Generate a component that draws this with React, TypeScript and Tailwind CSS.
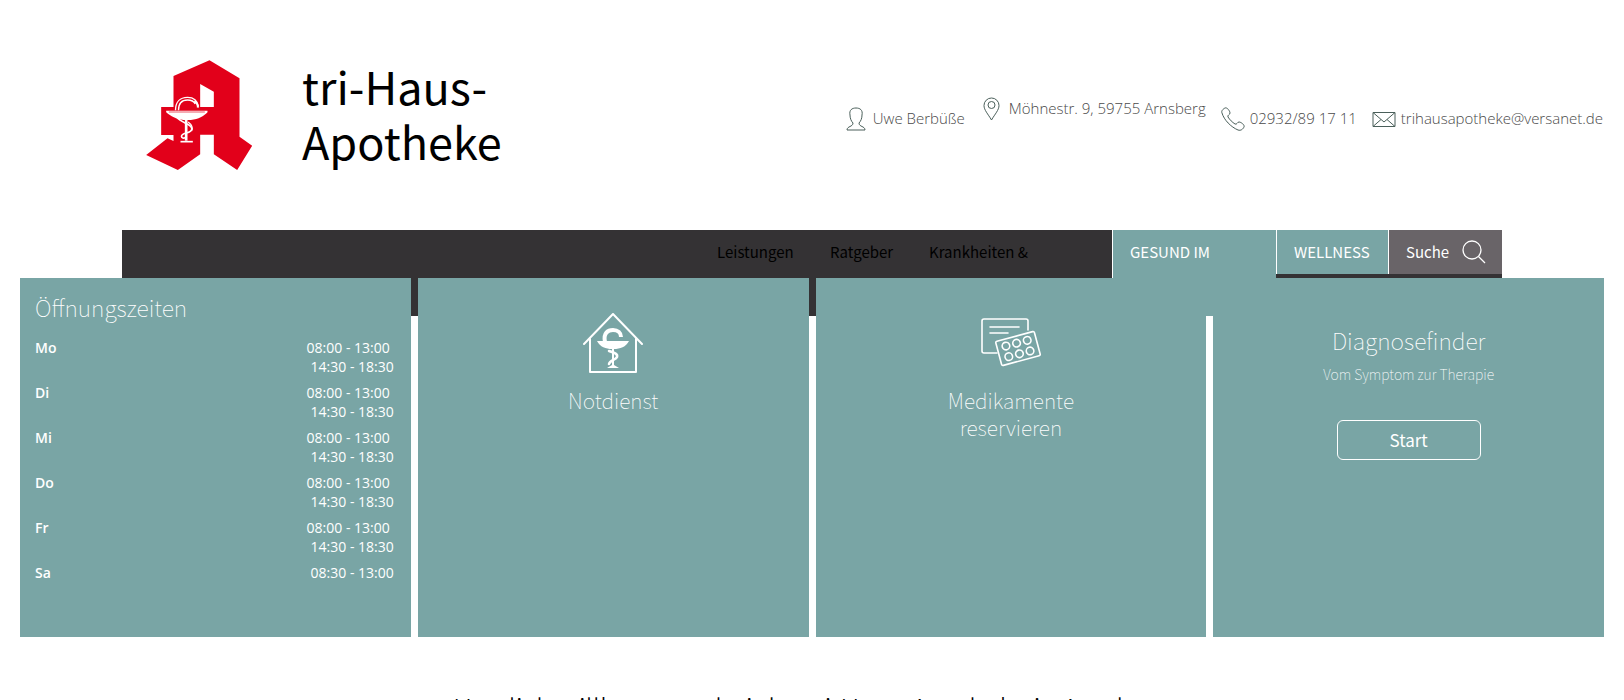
import React from 'react';

const contactIcon = 'shrink-0 fill-none stroke-[#4a5f5a]';

const hours = [
    { day: 'Mo', times: ['08:00 - 13:00', '14:30 - 18:30'] },
    { day: 'Di', times: ['08:00 - 13:00', '14:30 - 18:30'] },
    { day: 'Mi', times: ['08:00 - 13:00', '14:30 - 18:30'] },
    { day: 'Do', times: ['08:00 - 13:00', '14:30 - 18:30'] },
    { day: 'Fr', times: ['08:00 - 13:00', '14:30 - 18:30'] },
    { day: 'Sa', times: ['08:30 - 13:00'] },
];

const Logo: React.FC = () => (
    <svg className="mt-[2px] h-[110px] w-[107px] shrink-0" viewBox="78 60 320 330" role="img" aria-label="Apotheken-A">
        <path
            fill="#e2001a"
            fillRule="evenodd"
            d="M268 61 358 115V290L396 317 351 390 281 343V284H240V343L173 390 78 345 142 295 160 303V285H123V201H160V108ZM240 132V201H281V155Z"
        />
        {/* Bowl of Hygieia */}
        <path fill="#fff" d="M138 212H262V217C250 229 236 238 212 240H190C168 238 152 229 138 217Z" />
        <path d="M146 216H254" stroke="#e2001a" strokeWidth="2" />
        <g fill="none" stroke="#fff">
            <path strokeWidth="4" d="M166 211C166 186 180 172 202 172C222 172 232 182 235 200" />
            <path strokeWidth="4" d="M175 211C175 192 184 180 202 180C214 180 222 185 225 192" />
            <path strokeWidth="6" d="M222 184C230 188 234 194 233 203" />
            <path strokeWidth="8" d="M198 240V302" />
            <path strokeWidth="5" d="M170 232C184 250 215 252 215 266C215 282 184 276 184 289C184 294 190 296 196 292" />
            <path strokeWidth="4" d="M204 246C212 252 220 262 214 273" />
            <path strokeWidth="5" d="M181 305H218" />
        </g>
    </svg>
);

const Contacts: React.FC = () => (
    <address className="flex items-start text-[15px] leading-[22px] font-light text-[#4a4a4a] not-italic [font-family:'Open_Sans',sans-serif]">
        <span className="mt-[10px] mr-[18px] flex items-start">
            <svg className={contactIcon} width="20" height="24" viewBox="0 0 20 24">
                <path d="M7 16C5 14 4 11 4 8 3 3 6 1 10 1S17 3 16 8C16 11 15 14 13 16 13 20 19 19 19 23H1C1 19 7 20 7 16Z" />
            </svg>
            <span className="ml-[7px]">Uwe Berbüße</span>
        </span>
        <span className="mr-[15px] flex items-start">
            <svg className={contactIcon} width="17" height="24" viewBox="0 0 17 24">
                <path d="M8.500 23C5 17 1 13 1 8.500A7.500 7.500 0 0 1 16 8.500C16 13 12 17 8.500 23Z" />
                <circle cx="8.500" cy="8" r="3.500" />
            </svg>
            <span className="ml-[9px]">Möhnestr. 9, 59755 Arnsberg</span>
        </span>
        <a href="tel:+492932891711" className="mt-[10px] mr-[15px] flex items-start">
            <svg className={contactIcon} width="24" height="24" viewBox="0 0 24 24">
                <path d="M4 1C6 0 9 4 9 6S6 8 7 10C9 13 11 15 14 17 16 18 16 15 18 15S24 18 23 20C22 22 20 24 17 23 10 20 3 13 1 6 0 4 2 2 4 1Z" />
            </svg>
            <span className="ml-[5px]">02932/89 17 11</span>
        </a>
        <a href="mailto:trihausapotheke@versanet.de" className="mt-[10px] flex items-start">
            <svg className={contactIcon} width="24" height="24" viewBox="0 0 24 24">
                <path d="M1 5.500H23V19.500H1ZM1 5.500 12 15 23 5.500M1 19.500 9 12.500M23 19.500 15 12.500" />
            </svg>
            <span className="ml-[5px]">trihausapotheke@versanet.de</span>
        </a>
    </address>
);

const Navigation: React.FC = () => (
    <nav className="mx-auto flex h-[86px] w-full max-w-[1380px] items-start justify-end bg-[#343234] text-[15px] leading-[44px] text-black">
        <a href="#leistungen" className="w-[113px] px-[17px]">Leistungen</a>
        <a href="#ratgeber" className="w-[99px] px-[17px]">Ratgeber</a>
        <a href="#krankheiten" className="w-[200px] px-[17px]">Krankheiten &amp;</a>
        <a href="#gesund" className="h-full w-[164px] border-l border-white bg-[#79a5a5] px-[17px] text-white">
            GESUND IM
        </a>
        <a href="#wellness" className="w-28 border-l border-white bg-[#79a5a5] px-[17px] text-white">
            WELLNESS
        </a>
        <button type="button" className="flex h-11 w-[114px] items-center justify-between border-l border-white bg-[#696468] pr-4 pl-[17px] text-white">
            Suche
            <svg className="fill-none stroke-white" width="24" height="24" viewBox="0 0 24 24" strokeWidth="1.3">
                <circle cx="10" cy="10" r="9" />
                <path d="M16.500 16.500 23 23" />
            </svg>
        </button>
    </nav>
);

const OpeningHours: React.FC = () => (
    <section className="bg-[#79a5a5] px-[15px] pt-[11px]">
        <h2 className="text-[23px] leading-9 font-thin">Öffnungszeiten</h2>
        <table className="mt-[13px] w-full text-[14px] leading-[19px] [font-family:'Open_Sans',sans-serif]">
            <tbody>
                {hours.map(({ day, times }) => (
                    <tr key={day} className="align-top">
                        <th scope="row" className="pb-[7px] text-left font-semibold">{day}</th>
                        <td className="pr-[2px] pb-[7px] text-right">
                            {times.map((time, i) => (
                                <div key={time} className={i < times.length - 1 ? 'pr-1' : ''}>{time}</div>
                            ))}
                        </td>
                    </tr>
                ))}
            </tbody>
        </table>
    </section>
);

const App: React.FC = () => {
    return (
        <div className="overflow-hidden bg-white text-black [font-family:'Noto_Sans_CJK_SC','Noto_Sans',sans-serif]" lang="de">
            <header className="flex h-[230px] items-start justify-between pr-[21px] pl-[146px]">
                <a href="#start" className="flex items-start pt-[58px]">
                    <Logo />
                    <span className="ml-[49px] w-[220px] text-[45px] leading-[55px]">tri-Haus- Apotheke</span>
                </a>
                <div className="pt-[97px]">
                    <Contacts />
                </div>
            </header>

            <Navigation />

            <main>
                {/* Cards overlap the lower part of the navigation bar */}
                <div className="relative -mt-[38px] grid min-h-[359px] grid-cols-4 gap-[7px] px-5 text-white">
                    <OpeningHours />
                    <a href="#notdienst" className="flex flex-col items-center bg-[#79a5a5] pt-[35px]">
                        <svg width="60" height="62" viewBox="0 0 60 62" fill="none" stroke="#fff" strokeWidth="2" strokeLinecap="round" strokeLinejoin="round">
                            <path d="M1 31 30 1 59 31M7 26V59H53V26" />
                            <path strokeWidth="4" strokeLinecap="butt" d="M22 29C20 20 25 17 30 17 35 17 38 20 38 24" />
                            <path fill="#fff" stroke="none" d="M14 28H46C43 34 37 36 31 36V52L36 55H24L29 52V36C23 36 17 34 14 28Z" />
                            <path strokeWidth="2.500" d="M26 38C32 40 35 41 34 44S27 47 26 51" />
                        </svg>
                        <h2 className="mt-3 text-[21px] leading-[27px] font-thin">Notdienst</h2>
                    </a>
                    <a href="#medikamente" className="flex flex-col items-center bg-[#79a5a5] pt-[35px]">
                        <svg width="62" height="62" viewBox="0 0 62 62" fill="none" stroke="#fff" strokeWidth="1.600" strokeLinejoin="round" strokeLinecap="round">
                            <path d="M17 40H4Q2 40 2 38V8Q2 6 4 6H46Q48 6 48 8V17M10 14H39M10 20H28" />
                            <rect x="18" y="23" width="40" height="25" rx="1.500" transform="rotate(-15 38 35.500)" />
                            <g transform="rotate(-15 38 35.500)">
                                <circle cx="27" cy="30" r="3.800" />
                                <circle cx="38" cy="30" r="3.800" />
                                <circle cx="49" cy="30" r="3.800" />
                                <circle cx="27" cy="41" r="3.800" />
                                <circle cx="38" cy="41" r="3.800" />
                                <circle cx="49" cy="41" r="3.800" />
                            </g>
                        </svg>
                        <h2 className="mt-3 w-[150px] text-center text-[21px] leading-[27px] font-thin">
                            Medikamente reservieren
                        </h2>
                    </a>
                    <section className="flex flex-col items-center bg-[#79a5a5] pt-11">
                        <h2 className="text-[23px] leading-9 font-thin">Diagnosefinder</h2>
                        <p className="mt-1 text-[14px] leading-6 font-thin">Vom Symptom zur Therapie</p>
                        <button type="button" className="mt-[34px] h-10 w-36 rounded-md border border-white text-[17px]">
                            Start
                        </button>
                    </section>
                </div>

                <h1 className="mt-[46px] text-center text-[27px] leading-[50px] font-light">
                    Herzlich willkommen bei der tri-Haus-Apotheke in Arnsberg
                </h1>
            </main>
        </div>
    );
};

export default App;
